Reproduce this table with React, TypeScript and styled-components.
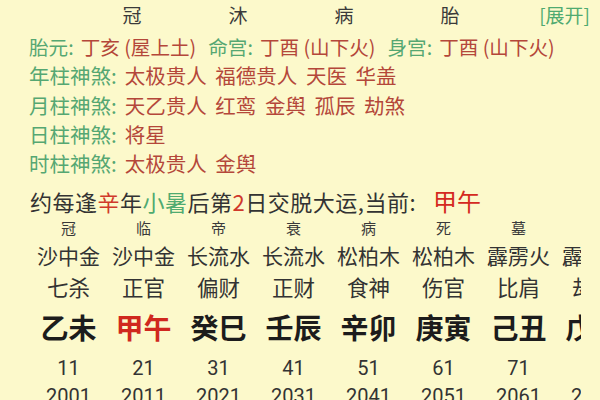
import React from 'react';
import styled, { createGlobalStyle } from 'styled-components';

const Global = createGlobalStyle`
  html, body { margin: 0; padding: 0; background: #fcf9cb; }
  body { font-family: "Noto Sans CJK SC", "Noto Sans", sans-serif; }
`;

const Page = styled.div`
  width: 600px;
  height: 400px;
  overflow: hidden;
  background: #fcf9cb;
  color: #333;
`;

const TopRow = styled.div`
  height: 29px;
  display: flex;
  align-items: center;
  padding-left: 79px;
  padding-right: 10px;
`;

const StageCell = styled.div`
  width: 106px;
  text-align: center;
  font-size: 19px;
  color: #3a3a3a;
  line-height: 29px;
`;

const Expand = styled.div`
  margin-left: auto;
  font-size: 19px;
  color: #4faa70;
  line-height: 29px;
`;

const Info = styled.div`
  padding-top: 3px;
  padding-left: 29px;
`;

const InfoLine = styled.div<{ $size?: number }>`
  font-size: ${p => p.$size ?? 20.5}px;
  line-height: 29.3px;
  white-space: nowrap;
  word-spacing: ${p => (p.$size ? 0 : 4)}px;
`;

const Label = styled.span`
  color: #55a772;
`;

const Colon = styled.span<{ $gap: number }>`
  color: #55a772;
  margin-right: ${p => p.$gap}px;
`;

const Value = styled.span`
  color: #b4473a;
  margin-right: 12px;
`;

const Dayun = styled.div`
  margin-top: 8px;
  padding-left: 30px;
  font-size: 22px;
  letter-spacing: 0.5px;
  line-height: 30px;
  color: #333;
  white-space: nowrap;
`;

const Hl = styled.span<{ $c: string }>`
  color: ${p => p.$c};
`;

const Current = styled.span`
  color: #d42a1f;
  font-size: 24px;
  letter-spacing: 0;
  margin-left: 17px;
`;

const Scroller = styled.div`
  margin-left: 31px;
  width: 550px;
  overflow: hidden;
`;

const Row = styled.div<{ $h: number; $size: number; $weight?: number; $font?: string; $color?: string }>`
  display: grid;
  grid-template-columns: repeat(8, 75px);
  width: 600px;
  height: ${p => p.$h}px;
  line-height: ${p => p.$h}px;
  font-size: ${p => p.$size}px;
  font-weight: ${p => p.$weight ?? 400};
  font-family: ${p => p.$font ?? '"Noto Sans CJK SC", sans-serif'};
  color: ${p => p.$color ?? '#333'};
`;

const Cell = styled.div<{ $red?: boolean }>`
  text-align: center;
  white-space: nowrap;
  color: ${p => (p.$red ? '#d0281e' : 'inherit')};
`;

const stages = ['冠', '沐', '病', '胎'];
const smalls = ['冠', '临', '帝', '衰', '病', '死', '墓', ''];
const nayin = ['沙中金', '沙中金', '长流水', '长流水', '松柏木', '松柏木', '霹雳火', '霹雳火'];
const gods = ['七杀', '正官', '偏财', '正财', '食神', '伤官', '比肩', '劫财'];
const gz = ['乙未', '甲午', '癸巳', '壬辰', '辛卯', '庚寅', '己丑', '戊子'];
const ages = ['11', '21', '31', '41', '51', '61', '71', '81'];
const years = ['2001', '2011', '2021', '2031', '2041', '2051', '2061', '2071'];

const shensha: [string, string[]][] = [
  ['年柱神煞', ['太极贵人', '福德贵人', '天医', '华盖']],
  ['月柱神煞', ['天乙贵人', '红鸾', '金舆', '孤辰', '劫煞']],
  ['日柱神煞', ['将星']],
  ['时柱神煞', ['太极贵人', '金舆']],
];

const palaces: [string, string][] = [
  ['胎元', '丁亥 (屋上土)'],
  ['命宫', '丁酉 (山下火)'],
  ['身宫', '丁酉 (山下火)'],
];

export default function App() {
  return (
    <Page>
      <Global />
      <TopRow>
        {stages.map(s => (
          <StageCell key={s}>{s}</StageCell>
        ))}
        <Expand>[展开]</Expand>
      </TopRow>
      <Info>
        <InfoLine $size={19.6}>
          {palaces.map(([k, v]) => (
            <React.Fragment key={k}>
              <Label>{k}</Label>
              <Colon $gap={7}>:</Colon>
              <Value>{v}</Value>
            </React.Fragment>
          ))}
        </InfoLine>
        {shensha.map(([k, vs]) => (
          <InfoLine key={k}>
            <Label>{k}</Label>
            <Colon $gap={8}>:</Colon>
            <Value>{vs.join(' ')}</Value>
          </InfoLine>
        ))}
      </Info>
      <Dayun>
        约每逢<Hl $c="#d0392b">辛</Hl>年<Hl $c="#4faa70">小暑</Hl>后第<Hl $c="#d0392b">2</Hl>日交脱大运,当前:
        <Current>甲午</Current>
      </Dayun>
      <Scroller>
        <Row $h={24} $size={15} $color="#3a3a3a">
          {smalls.map((s, i) => (
            <Cell key={i}>{s}</Cell>
          ))}
        </Row>
        <Row $h={30} $size={21}>
          {nayin.map((s, i) => (
            <Cell key={i}>{s}</Cell>
          ))}
        </Row>
        <Row $h={34} $size={21.5}>
          {gods.map((s, i) => (
            <Cell key={i}>{s}</Cell>
          ))}
        </Row>
        <Row $h={46} $size={28} $weight={600} $color="#1c1c1c">
          {gz.map((s, i) => (
            <Cell key={i} $red={i === 1}>
              {s}
            </Cell>
          ))}
        </Row>
        <Row $h={36} $size={20} $font='Roboto, "Noto Sans", sans-serif'>
          {ages.map((s, i) => (
            <Cell key={i}>{s}</Cell>
          ))}
        </Row>
        <Row $h={20} $size={20} $font='Roboto, "Noto Sans", sans-serif'>
          {years.map((s, i) => (
            <Cell key={i}>{s}</Cell>
          ))}
        </Row>
      </Scroller>
    </Page>
  );
}
